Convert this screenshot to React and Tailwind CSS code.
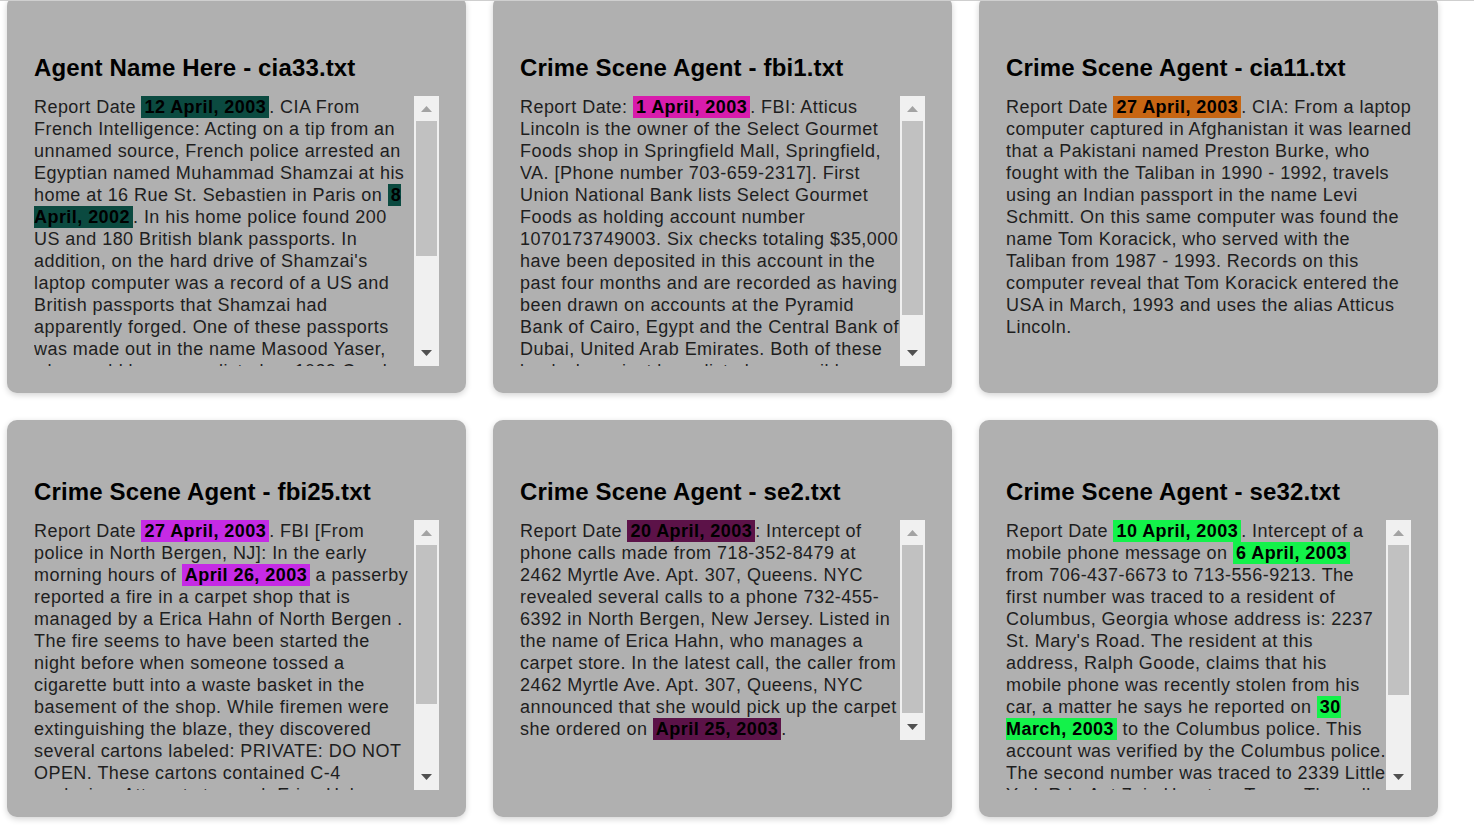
const font = { fontFamily: '"Liberation Sans", Arial, sans-serif' };

function Mark({ color, children }) {
  return <span className={`${color} px-[3px] py-px font-bold text-black`}>{children}</span>;
}

const reports = [
  {
    title: "Agent Name Here - cia33.txt",
    height: "h-[270px]",
    thumb: { top: 25, height: 135 },
    body: (
      <>
        Report Date <Mark color="bg-[#0b4a40]">12 April, 2003</Mark>. CIA From French Intelligence: Acting on a tip
        from an unnamed source, French police arrested an Egyptian named Muhammad Shamzai at his home at 16 Rue St.
        Sebastien in Paris on <Mark color="bg-[#0b4a40]">8 April, 2002</Mark>. In his home police found 200 US and
        180 British blank passports. In addition, on the hard drive of Shamzai's laptop computer was a record of a US
        and British passports that Shamzai had apparently forged. One of these passports was made out in the name
        Masood Yaser, who would be appear listed as 1029 Coral Mill Road in the records of the agency.
      </>
    ),
  },
  {
    title: "Crime Scene Agent - fbi1.txt",
    height: "h-[270px]",
    thumb: { top: 25, height: 194 },
    body: (
      <>
        Report Date: <Mark color="bg-[#d81cac]">1 April, 2003</Mark>. FBI: Atticus Lincoln is the owner of the
        Select Gourmet Foods shop in Springfield Mall, Springfield, VA. [Phone number 703-659-2317]. First Union
        National Bank lists Select Gourmet Foods as holding account number 1070173749003. Six checks totaling
        $35,000 have been deposited in this account in the past four months and are recorded as having been drawn on
        accounts at the Pyramid Bank of Cairo, Egypt and the Central Bank of Dubai, United Arab Emirates. Both of
        these banks have just been listed as possible sources of funding.
      </>
    ),
  },
  {
    title: "Crime Scene Agent - cia11.txt",
    body: (
      <>
        Report Date <Mark color="bg-[#c76613]">27 April, 2003</Mark>. CIA: From a laptop computer captured in
        Afghanistan it was learned that a Pakistani named Preston Burke, who fought with the Taliban in 1990 - 1992,
        travels using an Indian passport in the name Levi Schmitt. On this same computer was found the name Tom
        Koracick, who served with the Taliban from 1987 - 1993. Records on this computer reveal that Tom Koracick
        entered the USA in March, 1993 and uses the alias Atticus Lincoln.
      </>
    ),
  },
  {
    title: "Crime Scene Agent - fbi25.txt",
    height: "h-[270px]",
    thumb: { top: 25, height: 159 },
    body: (
      <>
        Report Date <Mark color="bg-[#c52be5]">27 April, 2003</Mark>. FBI [From police in North Bergen, NJ]: In the
        early morning hours of <Mark color="bg-[#c52be5]">April 26, 2003</Mark> a passerby reported a fire in a
        carpet shop that is managed by a Erica Hahn of North Bergen . The fire seems to have been started the night
        before when someone tossed a cigarette butt into a waste basket in the basement of the shop. While firemen
        were extinguishing the blaze, they discovered several cartons labeled: PRIVATE: DO NOT OPEN. These cartons
        contained C-4 explosive. Attempts to reach Erica Hahn have failed.
      </>
    ),
  },
  {
    title: "Crime Scene Agent - se2.txt",
    height: "h-[220px]",
    thumb: { top: 25, height: 168 },
    body: (
      <>
        Report Date <Mark color="bg-[#5c1248]">20 April, 2003</Mark>: Intercept of phone calls made from
        718-352-8479 at 2462 Myrtle Ave. Apt. 307, Queens. NYC revealed several calls to a phone 732-455-6392 in
        North Bergen, New Jersey. Listed in the name of Erica Hahn, who manages a carpet store. In the latest call,
        the caller from 2462 Myrtle Ave. Apt. 307, Queens, NYC announced that she would pick up the carpet she
        ordered on <Mark color="bg-[#5c1248]">April 25, 2003</Mark>.
      </>
    ),
  },
  {
    title: "Crime Scene Agent - se32.txt",
    height: "h-[270px]",
    thumb: { top: 25, height: 150 },
    body: (
      <>
        Report Date <Mark color="bg-[#13f24a]">10 April, 2003</Mark>. Intercept of a mobile phone message on{" "}
        <Mark color="bg-[#13f24a]">6 April, 2003</Mark> from 706-437-6673 to 713-556-9213. The first number was
        traced to a resident of Columbus, Georgia whose address is: 2237 St. Mary's Road. The resident at this
        address, Ralph Goode, claims that his mobile phone was recently stolen from his car, a matter he says he
        reported on <Mark color="bg-[#13f24a]">30 March, 2003</Mark> to the Columbus police. This account was
        verified by the Columbus police. The second number was traced to 2339 Little York Rd., Apt 7, in Houston,
        Texas. The call was made late at night.
      </>
    ),
  },
];

function Scrollbar({ height, thumb }) {
  return (
    <div className={`relative w-[25px] shrink-0 bg-[#f0f0f0] ${height}`}>
      <svg className="absolute left-[7px] top-[10px]" width="11" height="6" viewBox="0 0 11 6">
        <path d="M0 6 L5.5 0 L11 6 Z" fill="#a3a3a3" />
      </svg>
      <div
        className="absolute left-[2px] w-[21px] bg-[#c1c1c1]"
        style={{ top: thumb.top, height: thumb.height }}
      />
      <svg className="absolute bottom-[10px] left-[7px]" width="11" height="6" viewBox="0 0 11 6">
        <path d="M0 0 L11 0 L5.5 6 Z" fill="#505050" />
      </svg>
    </div>
  );
}

function ReportCard({ report }) {
  return (
    <div className="rounded-[10px] bg-[#b0b0b0] p-[27px] shadow-[0_2px_6px_rgba(0,0,0,0.18)]">
      <h2 className="mt-[31px] mb-[14px] text-[24px] leading-[28px] font-bold tracking-[0.15px] text-black">
        {report.title}
      </h2>
      <div className="flex items-start">
        <div
          className={`shrink-0 text-[18px] leading-[22px] tracking-[0.45px] text-[#1e1e1e] ${
            report.height ? `w-[380px] overflow-hidden ${report.height}` : "w-[409px]"
          }`}
        >
          {report.body}
        </div>
        {report.height ? <Scrollbar height={report.height} thumb={report.thumb} /> : null}
      </div>
    </div>
  );
}

export default function App() {
  return (
    <main className="min-h-[832px] overflow-hidden bg-white" style={font}>
      <div className="fixed left-0 top-0 z-10 h-px w-full bg-[#cfcfcf]" />
      <div className="-mt-[4px] grid w-[1438px] grid-cols-3 gap-[27px] pl-[7px]">
        {reports.map((report) => (
          <ReportCard key={report.title} report={report} />
        ))}
      </div>
    </main>
  );
}
